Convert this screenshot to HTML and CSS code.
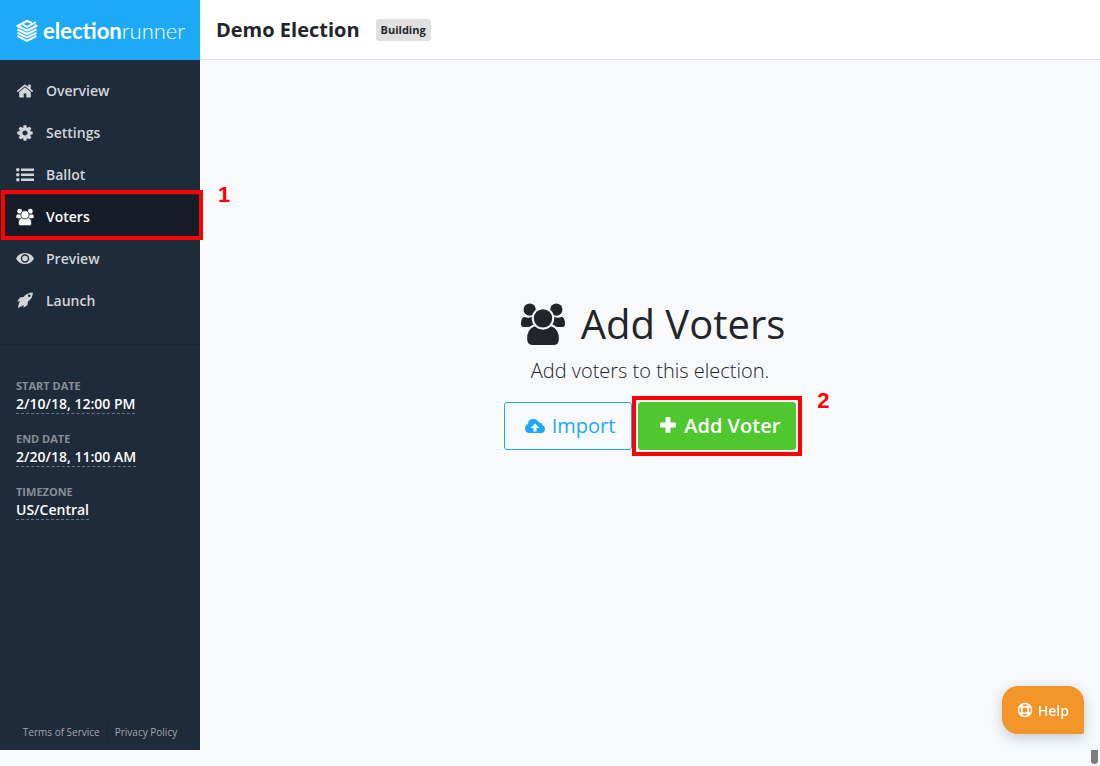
FILE: index.html
```html
<!DOCTYPE html>
<html lang="en">
<head>
    <meta charset="UTF-8">
    <meta name="viewport" content="width=device-width, initial-scale=1.0">
    <title>Demo Election - Voters</title>

    <link rel="stylesheet" href="styles.css">
</head>
<body>
    <!-- Icons shared by the page -->
    <svg class="icon-defs" aria-hidden="true">
        <symbol id="icon-users" viewBox="0 0 44 41">
            <circle cx="9" cy="6.500" r="6"/>
            <circle cx="35" cy="6.500" r="6"/>
            <path d="M3.500 13.500Q8 15.500 13 13L17 22L10 23.500H3Q.5 23.500 .5 20Q.5 15 3.500 13.500Z"/>
            <path d="M40.500 13.500Q36 15.500 31 13L27 22L34 23.500H41Q43.500 23.500 43.500 20Q43.500 15 40.500 13.500Z"/>
            <path class="icon-gap" d="M13 22H31Q38.500 25 38.500 35Q38.500 42 33 42H11.500Q5.500 42 5.500 35Q5.500 25 13 22Z"/>
            <circle class="icon-gap" cx="22" cy="15" r="10"/>
        </symbol>
    </svg>

    <aside class="sidebar">
        <a href="#" class="brand">
            <svg class="brand-mark" viewBox="0 0 22 22" aria-hidden="true">
                <path d="M16 3L11 1L1.500 6L11 10.500L20.500 6L18.500 5"/>
                <path d="M7 4.500L11 7L20 2"/>
                <path d="M1.500 9.500L11 14L20.500 9.500M1.500 12.800L11 17.300L20.500 12.800M1.500 16L11 20.800L20.500 16"/>
            </svg>
            <span class="brand-name"><b>election</b>runner</span>
        </a>

        <nav class="menu">
            <a href="#" class="menu-item">
                <svg class="icon" viewBox="0 0 1792 1792" aria-hidden="true"><path d="M1472 992v480q0 26-19 45t-45 19h-384v-384h-256v384h-384q-26 0-45-19t-19-45v-480q0-1 .5-3t.5-3l575-474 575 474q1 2 1 6zm223-69l-62 74q-8 9-21 11h-3q-13 0-21-7l-692-577-692 577q-12 8-24 7-13-2-21-11l-62-74q-8-10-7-23.500t11-21.500l719-599q32-26 76-26t76 26l244 204v-195q0-14 9-23t23-9h192q14 0 23 9t9 23v408l219 182q10 8 11 21.500t-7 23.500z"/></svg>
                Overview
            </a>
            <a href="#" class="menu-item">
                <svg class="icon" viewBox="0 0 1792 1792" aria-hidden="true"><path d="M1152 896q0-106-75-181t-181-75-181 75-75 181 75 181 181 75 181-75 75-181zm512-109v222q0 12-8 23t-20 13l-185 28q-19 54-39 91 35 50 107 138 10 12 10 25t-9 23q-27 37-99 108t-94 71q-12 0-26-9l-138-108q-44 23-91 38-16 136-29 186-7 28-36 28h-222q-14 0-24.500-8.500t-11.500-21.500l-28-184q-49-16-90-37l-141 107q-10 9-25 9-14 0-25-11-126-114-165-168-7-10-7-23 0-12 8-23 15-21 51-66.500t54-70.500q-27-50-41-99l-183-27q-13-2-21-12.500t-8-23.500v-222q0-12 8-23t19-13l186-28q14-46 39-92-40-57-107-138-10-12-10-24 0-10 9-23 26-36 98.500-107.500t94.500-71.500q13 0 26 10l138 107q44-23 91-38 16-136 29-186 7-28 36-28h222q14 0 24.500 8.500t11.500 21.500l28 184q49 16 90 37l142-107q9-9 24-9 13 0 25 10 129 119 165 170 7 8 7 22 0 12-8 23-15 21-51 66.500t-54 70.500q26 50 41 98l183 28q13 2 21 12.500t8 23.500z"/></svg>
                Settings
            </a>
            <a href="#" class="menu-item">
                <svg class="icon" viewBox="0 0 18 18" aria-hidden="true"><path d="M5 2.500h13v2.500H5zM5 7.500h13v2.500H5zM5 12.500h13v2.500H5z"/><circle cx="1.800" cy="3.800" r="1.800"/><circle cx="1.800" cy="8.800" r="1.800"/><circle cx="1.800" cy="13.800" r="1.800"/></svg>
                Ballot
            </a>
            <a href="#" class="menu-item active">
                <svg class="icon" aria-hidden="true"><use href="#icon-users"/></svg>
                Voters
                <span class="callout callout-menu"><span class="callout-number">1</span></span>
            </a>
            <a href="#" class="menu-item">
                <svg class="icon" viewBox="0 0 18 18" aria-hidden="true"><path fill-rule="evenodd" d="M0 8.500Q3 3 9 3T18 8.500Q15 14 9 14T0 8.500ZM9 4.300A4.200 4.200 0 1 0 9 12.700A4.200 4.200 0 1 0 9 4.300Z"/><circle cx="9" cy="8.500" r="2.800"/></svg>
                Preview
            </a>
            <a href="#" class="menu-item">
                <svg class="icon" viewBox="0 0 18 18" aria-hidden="true"><path fill-rule="evenodd" d="M16.800 .5Q11 .5 7.500 5L4 5.500L1.200 9.500L4 9.300L3 11L1.800 16L6 14L7.700 13L7.500 15.800L11.500 13L12 9.500Q17 6 16.800 .5ZM13.200 2.500A1.300 1.300 0 1 0 13.200 5.100A1.300 1.300 0 1 0 13.200 2.500Z"/></svg>
                Launch
            </a>
        </nav>

        <dl class="details">
            <dt>Start Date</dt>
            <dd><a href="#">2/10/18, 12:00 PM</a></dd>
            <dt>End Date</dt>
            <dd><a href="#">2/20/18, 11:00 AM</a></dd>
            <dt>Timezone</dt>
            <dd><a href="#">US/Central</a></dd>
        </dl>

        <div class="legal">
            <a href="#">Terms of Service</a>
            <a href="#">Privacy Policy</a>
        </div>
    </aside>

    <div class="page">
        <header class="page-header">
            <h1>Demo Election</h1>
            <span class="badge">Building</span>
        </header>

        <main class="empty-state">
            <h2>
                <svg class="icon" aria-hidden="true"><use href="#icon-users"/></svg>
                Add Voters
            </h2>
            <p>Add voters to this election.</p>
            <div class="actions">
                <button type="button" class="btn btn-import">
                    <svg class="icon" viewBox="0 0 26 20" aria-hidden="true"><path fill-rule="evenodd" d="M9 18Q4 18 4 13.500Q4 10.500 7 9Q7 4 12.500 4Q16.500 4 18 7.500Q21 7 21.500 10Q24 11 24 14Q24 18 20 18ZM14 8.500L9.500 13H12.500V16.500H15.500V13H18.500Z"/></svg>
                    Import
                </button>
                <button type="button" class="btn btn-add">
                    <svg class="icon" viewBox="0 0 26 20" aria-hidden="true"><path d="M12.500 2h3q1 0 1 1V7.500H21q1 0 1 1v3q0 1-1 1H16.500V17q0 1-1 1h-3q-1 0-1-1V12.500H7q-1 0-1-1v-3q0-1 1-1H11.500V3q0-1 1-1z"/></svg>
                    Add Voter
                    <span class="callout callout-add"><span class="callout-number">2</span></span>
                </button>
            </div>
        </main>
    </div>

    <button type="button" class="help">
        <svg class="help-icon" viewBox="0 0 16 16" aria-hidden="true"><circle cx="8" cy="8" r="6.500"/><circle cx="8" cy="8" r="3.300"/><path class="help-spokes" d="M3.400 3.400L5.700 5.700M12.600 3.400L10.300 5.700M3.400 12.600L5.700 10.300M12.600 12.600L10.300 10.300"/></svg>
        Help
    </button>
    <span class="scroll-thumb"></span>
</body>
</html>
```
FILE: styles.css
```css
* {
    box-sizing: border-box;
}

body {
    display: flex;
    min-height: 100vh;
    margin: 0;
    padding-bottom: 16px;
    background-color: #f7f9fb;
    color: #212529;
    font-family: "Open Sans", sans-serif;
    font-size: 16px;
    line-height: 24px;
}

a {
    color: inherit;
    text-decoration: none;
}

.icon-defs {
    position: absolute;
    width: 0;
    height: 0;
}

.icon {
    fill: currentColor;
    flex: none;
}

/* Separates the front figure from the ones behind it */
.icon-gap {
    stroke: var(--icon-gap, #f7f9fb);
    stroke-width: 2;
}

/* Sidebar */
.sidebar {
    display: flex;
    flex-direction: column;
    flex: none;
    width: 200px;
    background-color: #1e2b3b;
    color: #fff;
}

.brand {
    display: flex;
    align-items: center;
    gap: 5px;
    height: 60px;
    padding: 2px 0 0 16px;
    background-color: #1caaf8;
}

.brand-mark {
    flex: none;
    width: 22px;
    height: 22px;
    fill: none;
    stroke: #fff;
    stroke-width: 2;
    stroke-linejoin: round;
}

.brand-name {
    font-family: Lato, sans-serif;
    font-size: 22px;
    font-weight: 300;
    line-height: 20px;
}

.brand-name b {
    font-weight: 700;
}

.menu {
    padding: 9px 0 23px;
    border-bottom: 1px solid #1a2533;
}

.menu-item {
    display: flex;
    align-items: center;
    gap: 12px;
    position: relative;
    height: 42px;
    padding: 1px 16px 0;
    color: #d2d5d8;
    font-size: 14px;
    font-weight: 600;
}

.menu-item .icon {
    width: 18px;
    height: 18px;
}

.menu-item.active {
    --icon-gap: #151c28;
    background-color: #151c28;
    color: #fff;
}

.details {
    margin: 32px 16px;
    font-size: 14px;
    font-weight: 600;
    line-height: 18px;
}

.details dt {
    color: #868e96;
    font-size: 11px;
    font-weight: 700;
    text-transform: uppercase;
}

.details dd {
    margin: 0 0 16px;
}

.details a {
    display: inline-block;
    border-bottom: 1px dashed #6c7783;
}

.legal {
    display: flex;
    justify-content: center;
    margin-top: auto;
    padding-bottom: 10px;
    color: #a0a6ad;
    font-size: 10px;
    line-height: 16px;
}

.legal a {
    padding: 0 7px;
}

.legal a + a {
    border-left: 1px solid #18222f;
}

/* Main area */
.page {
    display: flex;
    flex-direction: column;
    flex: 1;
}

.page-header {
    display: flex;
    align-items: center;
    gap: 16px;
    height: 60px;
    padding: 1px 16px 0;
    background-color: #fff;
    border-bottom: 1px solid #dfe2e6;
}

.page-header h1 {
    margin: 0;
    font-size: 20px;
    font-weight: 700;
}

.badge {
    padding: 0 5px;
    border-radius: 3px;
    background-color: #e0e0e0;
    font-size: 11px;
    font-weight: 700;
    line-height: 22px;
}

.empty-state {
    display: flex;
    flex-direction: column;
    align-items: center;
    justify-content: center;
    flex: 1;
    padding-bottom: 60px;
}

.empty-state h2 {
    display: flex;
    align-items: center;
    gap: 10px;
    margin: 0 0 8px;
    font-size: 40px;
    font-weight: 400;
    line-height: 48px;
}

.empty-state h2 .icon {
    width: 56px;
    height: 42px;
}

.empty-state p {
    margin: 0 0 16px;
    font-size: 20px;
    font-weight: 300;
    line-height: 30px;
}

.actions {
    display: flex;
    gap: 6px;
}

.btn {
    display: flex;
    align-items: center;
    gap: 5px;
    position: relative;
    height: 48px;
    padding: 0 16px 2px;
    border: 1px solid;
    border-radius: 3px;
    font-family: inherit;
    font-size: 20px;
    cursor: pointer;
}

.btn .icon {
    width: 26px;
    height: 20px;
}

.btn-import {
    background-color: transparent;
    border-color: #1caaf8;
    color: #1caaf8;
}

.btn-add {
    gap: 4px;
    padding: 0 15px 2px;
    background-color: #50c72f;
    border-color: #50c72f;
    color: #fff;
    font-weight: 600;
}

/* Numbered step highlights */
.callout {
    position: absolute;
    border: 4px solid #fe0000;
    pointer-events: none;
}

.callout-menu {
    inset: -5px -3px -3px 1px;
}

.callout-add {
    inset: -7px;
}

.callout-number {
    position: absolute;
    top: -10px;
    left: 100%;
    padding-left: 19px;
    color: #fe0000;
    font-family: "Liberation Sans", Arial, sans-serif;
    font-size: 22px;
    font-weight: 700;
    line-height: 22px;
}

/* Help button */
.help {
    display: flex;
    align-items: center;
    justify-content: center;
    gap: 5px;
    position: fixed;
    right: 16px;
    bottom: 32px;
    height: 48px;
    padding: 0 15px;
    border: none;
    border-radius: 16px 16px 2px 16px;
    background-color: #f39528;
    box-shadow: 0 4px 12px rgba(40, 80, 110, 0.25);
    color: #fff;
    font-family: inherit;
    font-size: 14px;
    font-weight: 600;
    cursor: pointer;
}

.help-icon {
    width: 16px;
    height: 16px;
    fill: none;
    stroke: currentColor;
    stroke-width: 1.5;
}

.help-spokes {
    stroke-width: 3;
}

.scroll-thumb {
    position: fixed;
    right: 2px;
    bottom: 2px;
    width: 7px;
    height: 14px;
    border-radius: 0 0 4px 4px;
    background-color: #7d7d7d;
}
```
